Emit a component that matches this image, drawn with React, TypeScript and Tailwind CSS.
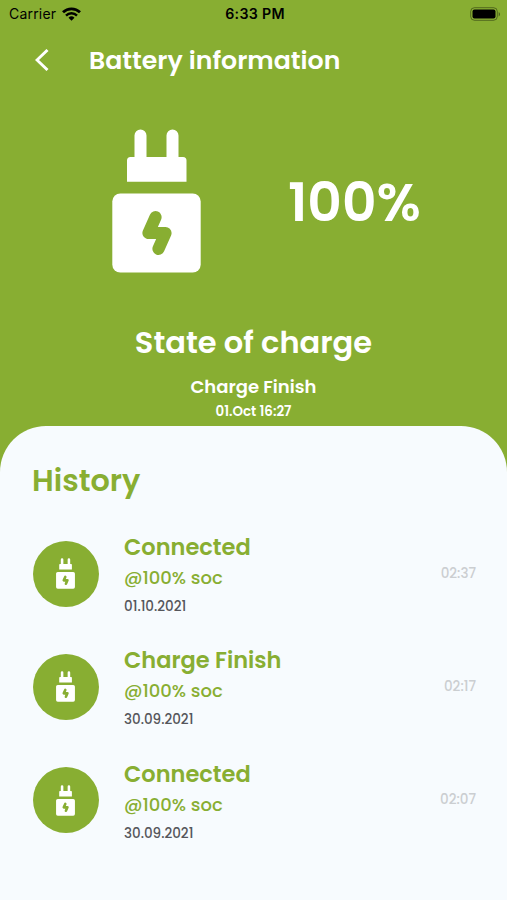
import React from "react";

type HistoryItem = {
  id: number;
  title: string;
  soc: string;
  date: string;
  time: string;
};

const historyItems: HistoryItem[] = [
  { id: 1, title: "Connected", soc: "@100% soc", date: "01.10.2021", time: "02:37" },
  { id: 2, title: "Charge Finish", soc: "@100% soc", date: "30.09.2021", time: "02:17" },
  { id: 3, title: "Connected", soc: "@100% soc", date: "30.09.2021", time: "02:07" },
];

const PlugIcon: React.FC<{ className?: string }> = ({ className }) => (
  <svg viewBox="0 0 89 144" className={className} fill="none">
    <path
      d="M22.5 52V6.5a6 6 0 0 1 12 0V28h20V6.5a6 6 0 0 1 12 0V28h4.500a3.500 3.500 0 0 1 3.500 3.500V52.700h-59.500V31.500a3.500 3.500 0 0 1 3.500-3.500h4z"
      fill="white"
    />
    <rect x="0.300" y="64.500" width="88.400" height="79" rx="8" fill="white" />
    <path
      d="M43.500 88.200L36.500 104H53.500L46.500 119.800"
      stroke="#88AE32"
      strokeWidth="12.200"
      strokeLinecap="round"
      strokeLinejoin="round"
    />
  </svg>
);

const StatusBar: React.FC = () => (
  <div className="grid grid-cols-[1fr_auto_1fr] items-center h-[27px] pl-[9px] pr-[6px] text-black font-['Inter',sans-serif]">
    <div className="flex items-center gap-[6px]">
      <span className="text-[14px] tracking-[0.2px]">Carrier</span>
      <svg viewBox="0 0 19 14" className="w-[19px] h-[14px]" fill="none">
        <path d="M1 5.300a12.200 12.200 0 0 1 17 0" stroke="black" strokeWidth="2.800" />
        <path d="M4 8.600a7.900 7.900 0 0 1 11 0" stroke="black" strokeWidth="2.500" />
        <path d="M9.500 13.800L6.500 10.800a4.300 4.300 0 0 1 6 0z" fill="black" />
      </svg>
    </div>
    <span className="text-center text-[14.2px] font-semibold tracking-[0.3px]">6:33 PM</span>
    <svg viewBox="0 0 31 14" className="w-[31px] h-[14px] justify-self-end" fill="none">
      <rect x="0.700" y="0.700" width="26.600" height="12.600" rx="3.800" stroke="black" strokeOpacity="0.4" />
      <rect x="2.500" y="2.500" width="23" height="9" rx="2" fill="black" />
      <path d="M28.700 5v4.400c1.800-.8 1.800-3.600 0-4.400z" fill="black" fillOpacity="0.45" />
    </svg>
  </div>
);

const HistoryRow: React.FC<{ item: HistoryItem }> = ({ item }) => (
  <li className="flex items-center h-[113.300px] pl-[0.5px]">
    <div className="flex items-center justify-center size-[66px] shrink-0 rounded-full bg-[#88AE32]">
      <PlugIcon className="w-[19px] h-[31px]" />
    </div>
    <div className="ml-[25.500px] pt-[5px] flex-1 text-[#88AE32]">
      <h3 className="text-[22.5px] leading-[29px] font-semibold">{item.title}</h3>
      <p className="text-[18px] leading-[32px] font-medium">{item.soc}</p>
      <p className="text-[13.5px] leading-[25px] font-medium text-[#55565b]">{item.date}</p>
    </div>
    <span className="text-[13.5px] font-medium text-[#cbced1]">{item.time}</span>
  </li>
);

export default function App() {
  return (
    <div className="flex flex-col h-[900px] overflow-hidden bg-[#88AE32] font-['Poppins','Inter',sans-serif]">
      <StatusBar />
      <header className="flex items-center h-[65px] pl-[35px] text-white">
        <button aria-label="Back">
          <svg viewBox="0 0 14 22" className="w-[14px] h-[22px]" fill="none">
            <path d="M12.500 1L2 11l10.500 10" stroke="white" strokeWidth="2.900" />
          </svg>
        </button>
        <h1 className="ml-10 pt-[2px] text-[25.2px] leading-8 font-semibold">Battery information</h1>
      </header>

      <section className="flex items-center pt-[37px] pl-[112px] text-white">
        <PlugIcon className="w-[89px] h-[144px]" />
        <span className="ml-[87px] pt-[3px] text-[53.5px] leading-[60px] font-semibold">100%</span>
      </section>

      <section className="flex flex-col items-center flex-1 pt-[49px] text-white">
        <h2 className="text-[30.5px] leading-[42px] font-semibold">State of charge</h2>
        <p className="mt-[11px] text-[18px] leading-6 font-semibold">Charge Finish</p>
        <p className="mt-[3px] text-[13.4px] leading-5 font-semibold">01.Oct 16:27</p>
      </section>

      <main className="h-[474px] shrink-0 rounded-t-[46px] bg-[#F7FBFE] pl-[32px] pr-[31px] pt-[35px]">
        <h2 className="text-[30.3px] leading-10 font-semibold text-[#88AE32]">History</h2>
        <ul className="mt-[16px]">
          {historyItems.map((item) => (
            <HistoryRow key={item.id} item={item} />
          ))}
        </ul>
      </main>
    </div>
  );
}
